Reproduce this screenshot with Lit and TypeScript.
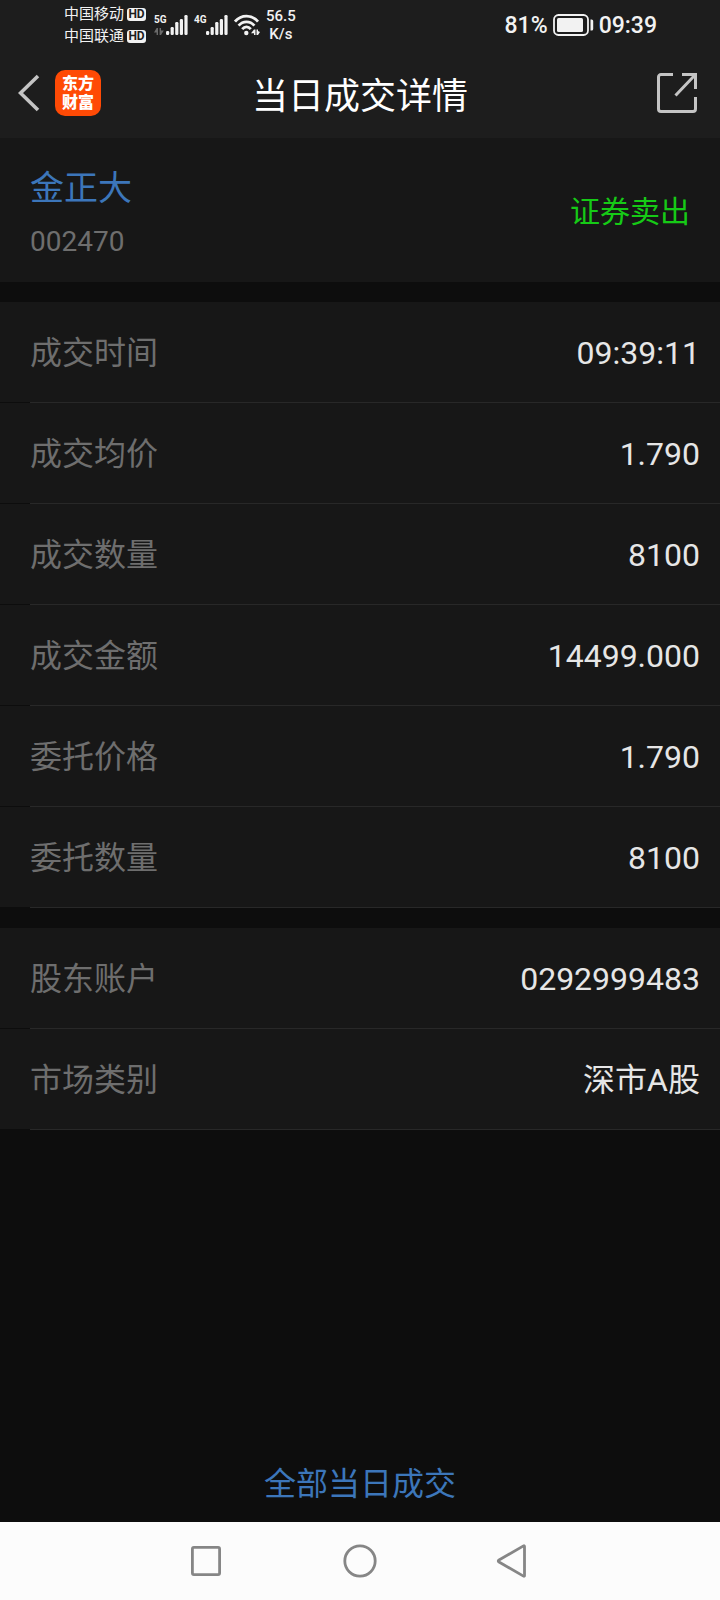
import { LitElement, html, css, svg } from "lit";
import { customElement, property } from "lit/decorators.js";

type Field = { label: string; value: string };

const TRADE: Field[] = [
  { label: "成交时间", value: "09:39:11" },
  { label: "成交均价", value: "1.790" },
  { label: "成交数量", value: "8100" },
  { label: "成交金额", value: "14499.000" },
  { label: "委托价格", value: "1.790" },
  { label: "委托数量", value: "8100" },
];

const ACCOUNT: Field[] = [
  { label: "股东账户", value: "0292999483" },
  { label: "市场类别", value: "深市A股" },
];

@customElement("status-bar")
export class StatusBar extends LitElement {
  static styles = css`
    :host {
      display: flex;
      justify-content: space-between;
      align-items: center;
      height: 50px;
      padding: 0 63px 0 64px;
      color: #f2f2f2;
    }
    svg { display: block; }
    .group { display: flex; align-items: center; gap: 6px; }
    .carriers { margin-right: 2px; }
    .carrier {
      display: flex;
      align-items: center;
      gap: 3px;
      font-size: 15px;
      line-height: 22px;
    }
    .hd {
      width: 19px;
      height: 13px;
      border-radius: 3px;
      background: #f2f2f2;
      color: #1d1d1d;
      font-size: 12px;
      font-weight: 700;
      line-height: 13px;
      text-align: center;
    }
    .signal { display: flex; height: 20px; }
    .net { width: 12px; font-size: 10px; font-weight: 700; line-height: 10px; }
    .net svg { margin-top: 3px; }
    .speed {
      font-size: 15px;
      font-weight: 500;
      line-height: 18px;
      text-align: center;
    }
    .power { gap: 5px; font-size: 23px; font-weight: 500; line-height: 28px; }
    .power span { padding-top: 2px; }
  `;

  private carrier(name: string) {
    return html`<div class="carrier"><span>${name}</span><span class="hd">HD</span></div>`;
  }

  private signal(net: string, arrows: boolean) {
    const bars = [4, 8, 13, 16, 20];
    return html`<div class="signal">
      <div class="net">
        ${net}
        ${arrows
          ? html`<svg width="10" height="7" viewBox="0 0 10 7" fill="#6a6a6a">
              <path d="M2.6 0H4v7H2.6V4.6H0zM5.6 0H7v2.4h2.8L7 7H5.6z" />
            </svg>`
          : ""}
      </div>
      <svg width="22" height="20" viewBox="0 0 22 20" fill="currentColor">
        ${bars.map((h, i) => svg`<rect x=${i * 4.6} y=${20 - h} width="3.2" height=${h} rx="1.2" />`)}
      </svg>
    </div>`;
  }

  render() {
    return html`
      <div class="group">
        <div class="carriers">${this.carrier("中国移动")}${this.carrier("中国联通")}</div>
        ${this.signal("5G", true)} ${this.signal("4G", false)}
        <svg width="26" height="22" viewBox="0 0 26 22" fill="none" stroke="currentColor" stroke-width="2.8">
          <path d="M1 7.6C7.5 .2 17.5 .2 24 7.6" />
          <path d="M4.6 11.6C9 6.6 16 6.6 20.4 11.6" />
          <path d="M8.2 15.2C10.8 12.2 14.2 12.2 16.8 15.2" />
          <circle cx="12.3" cy="19" r="2.2" fill="currentColor" stroke="none" />
          <path d="M20 15.5h1.5V21H20v-1.800h-3zM22.5 15.5H24v1.600l2 1L24 21h-1.500z" fill="currentColor" stroke="none" />
        </svg>
        <div class="speed">56.5<br />K/s</div>
      </div>
      <div class="group power">
        <span>81%</span>
        <svg width="41" height="22" viewBox="0 0 41 22">
          <rect x="1" y="1" width="34" height="20" rx="4.5" fill="none" stroke="currentColor" stroke-width="1.8" />
          <rect x="4" y="4" width="26" height="14" rx="1.5" fill="currentColor" />
          <path d="M37.5 5.5h1.200a1.500 1.500 0 0 1 1.500 1.500v8a1.500 1.500 0 0 1-1.500 1.500h-1.200z" fill="currentColor" />
        </svg>
        <span>09:39</span>
      </div>
    `;
  }
}

@customElement("title-bar")
export class TitleBar extends LitElement {
  static styles = css`
    :host {
      display: grid;
      grid-template-columns: 1fr auto 1fr;
      align-items: center;
      box-sizing: border-box;
      height: 88px;
      padding: 0 18px 2px;
    }
    .side { display: flex; align-items: center; gap: 14px; }
    .end { justify-content: flex-end; }
    button { padding: 0; border: 0; background: none; color: #c4c4c4; cursor: pointer; }
    svg { display: block; }
    .logo {
      display: grid;
      align-content: center;
      width: 46px;
      height: 46px;
      border-radius: 10px;
      background: #ff4a05;
      color: #fff;
      font-size: 16px;
      font-weight: 900;
      line-height: 19px;
      text-align: center;
      text-decoration: none;
    }
    h1 {
      margin: 0;
      color: #fff;
      font-family: "Noto Sans CJK SC", sans-serif;
      font-size: 36px;
      font-weight: 400;
      line-height: 48px;
    }
  `;

  render() {
    return html`
      <div class="side">
        <button aria-label="返回">
          <svg width="23" height="38" viewBox="0 0 23 38" fill="none" stroke="currentColor" stroke-width="3.6">
            <path d="M20 2L2.5 19L20 36" />
          </svg>
        </button>
        <a class="logo" href="#"><span>东方</span><span>财富</span></a>
      </div>
      <h1>当日成交详情</h1>
      <div class="side end">
        <button aria-label="分享">
          <svg width="46" height="42" viewBox="0 0 46 42" fill="none" stroke="currentColor" stroke-width="3">
            <path d="M17 2.500H5a2.500 2.500 0 0 0-2.500 2.500v32A2.500 2.500 0 0 0 5 39.500h32a2.500 2.500 0 0 0 2.500-2.500V25M26 2.500h13.500V17M39 3L19.500 23.500" />
          </svg>
        </button>
      </div>
    `;
  }
}

@customElement("field-list")
export class FieldList extends LitElement {
  @property({ attribute: false }) fields: Field[] = [];

  static styles = css`
    :host { display: block; }
    dl { margin: 0; }
    .row {
      display: flex;
      justify-content: space-between;
      align-items: center;
      box-sizing: border-box;
      height: 100px;
      padding: 2px 20px 0 30px;
      background: #171717;
      font-size: 32px;
      line-height: 44px;
    }
    .item::after {
      content: "";
      display: block;
      height: 1px;
      margin-left: 30px;
      background: #282828;
    }
    dt { color: #6e6e6e; }
    dd { margin: 0; color: #e6e6e6; }
  `;

  render() {
    return html`<dl>
      ${this.fields.map(
        (f) => html`<div class="item"><div class="row"><dt>${f.label}</dt><dd>${f.value}</dd></div></div>`
      )}
    </dl>`;
  }
}

@customElement("system-nav")
export class SystemNav extends LitElement {
  static styles = css`
    :host {
      display: grid;
      grid-template-columns: repeat(3, 1fr);
      height: 78px;
      padding: 0 18%;
      background: #fcfcfc;
    }
    button {
      display: grid;
      place-items: center;
      padding: 0;
      border: 0;
      background: none;
      color: #868686;
      cursor: pointer;
    }
  `;

  private icon(shape: unknown) {
    return html`<svg width="36" height="36" viewBox="0 0 36 36" fill="none" stroke="currentColor" stroke-width="2.8" stroke-linejoin="round">${shape}</svg>`;
  }

  render() {
    return html`
      <button aria-label="最近任务">${this.icon(svg`<rect x="4.4" y="4.4" width="27.2" height="27.2" rx="1.5" />`)}</button>
      <button aria-label="主屏幕">${this.icon(svg`<circle cx="18" cy="18" r="15.2" />`)}</button>
      <button aria-label="返回">${this.icon(svg`<path d="M27.5 2.900q1-.5 1 .7v28.800q0 1.200-1 .7L3 19q-1.500-1 0-2z" />`)}</button>
    `;
  }
}

@customElement("app-root")
export class AppRoot extends LitElement {
  static styles = css`
    :host {
      display: flex;
      flex-direction: column;
      min-height: 100vh;
      background: #0d0d0d;
      font-family: Roboto, "Noto Sans CJK SC", sans-serif;
    }
    header { background: #1d1d1d; }
    main { flex: 1; display: flex; flex-direction: column; gap: 20px; }
    .stock {
      display: flex;
      justify-content: space-between;
      align-items: center;
      padding: 26px 30px 22px;
      background: #171717;
    }
    .name { margin: 0 0 12px; color: #3c76ba; font-size: 34px; font-weight: 400; line-height: 48px; }
    .code { margin: 0; color: #6e6e6e; font-size: 28px; line-height: 36px; }
    .side { color: #16ca16; font-size: 30px; line-height: 40px; }
    .all {
      margin-top: auto;
      align-self: center;
      color: #3c76ba;
      font-size: 32px;
      line-height: 76px;
      text-decoration: none;
    }
  `;

  render() {
    return html`
      <header>
        <status-bar></status-bar>
        <title-bar></title-bar>
      </header>
      <main>
        <section class="stock">
          <div>
            <h2 class="name">金正大</h2>
            <p class="code">002470</p>
          </div>
          <span class="side">证券卖出</span>
        </section>
        <field-list .fields=${TRADE}></field-list>
        <field-list .fields=${ACCOUNT}></field-list>
        <a class="all" href="#">全部当日成交</a>
      </main>
      <system-nav></system-nav>
    `;
  }
}
